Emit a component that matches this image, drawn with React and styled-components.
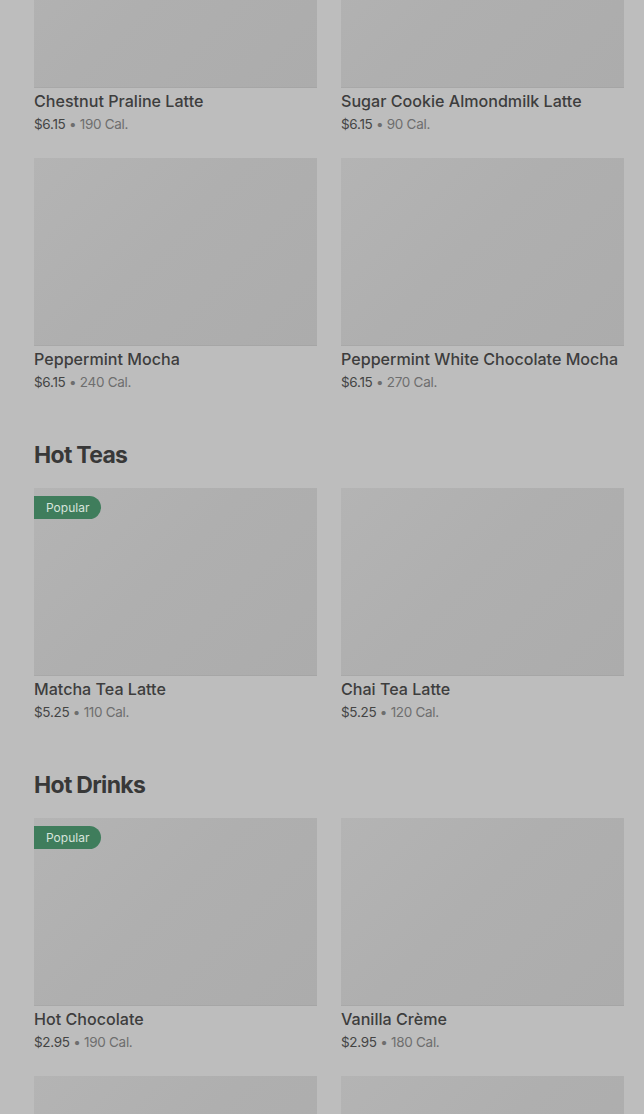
import React from 'react';
import styled, { createGlobalStyle } from 'styled-components';

const sections = [
  {
    title: null,
    items: [
      { name: 'Chestnut Praline Latte', price: '$6.15', cal: '190 Cal.' },
      { name: 'Sugar Cookie Almondmilk Latte', price: '$6.15', cal: '90 Cal.' },
      { name: 'Peppermint Mocha', price: '$6.15', cal: '240 Cal.' },
      { name: 'Peppermint White Chocolate Mocha', price: '$6.15', cal: '270 Cal.' }
    ]
  },
  {
    title: 'Hot Teas',
    items: [
      { name: 'Matcha Tea Latte', price: '$5.25', cal: '110 Cal.', popular: true },
      { name: 'Chai Tea Latte', price: '$5.25', cal: '120 Cal.' }
    ]
  },
  {
    title: 'Hot Drinks',
    items: [
      { name: 'Hot Chocolate', price: '$2.95', cal: '190 Cal.', popular: true },
      { name: 'Vanilla Crème', price: '$2.95', cal: '180 Cal.' },
      { name: '', price: '', cal: '' },
      { name: '', price: '', cal: '' }
    ]
  }
];

const App = () => {
  return (
    <>
      <GlobalStyle />
      <Page>
        {sections.map((section, i) => (
          <Section key={i}>
            {section.title && <SectionTitle>{section.title}</SectionTitle>}
            <Grid>
              {section.items.map((item, j) => (
                <Card key={j}>
                  <Thumb>
                    {item.popular && <Badge>Popular</Badge>}
                  </Thumb>
                  {item.name && (
                    <>
                      <Name>{item.name}</Name>
                      <Meta>
                        <Price>{item.price}</Price>
                        <Cal> • {item.cal}</Cal>
                      </Meta>
                    </>
                  )}
                </Card>
              ))}
            </Grid>
          </Section>
        ))}
      </Page>
    </>
  );
};

const GlobalStyle = createGlobalStyle`
  html, body {
    margin: 0;
    padding: 0;
    background: #bdbdbd;
    overflow: hidden;
  }
  body {
    font-family: Inter, "Noto Sans", sans-serif;
    color: #3a3a3a;
  }
`;

const Page = styled.div`
  margin-top: -100px;
  padding: 0 20px 0 34px;
  display: flex;
  flex-direction: column;
  gap: 47px;
`;

const Section = styled.section`
  display: flex;
  flex-direction: column;
  gap: 17px;
`;

const SectionTitle = styled.h2`
  margin: 0;
  font-size: 23px;
  line-height: 32px;
  font-weight: 700;
  letter-spacing: -0.7px;
  color: #383838;
`;

const Grid = styled.div`
  display: grid;
  grid-template-columns: 283px 283px;
  column-gap: 24px;
  row-gap: 24px;
`;

const Card = styled.div`
  display: flex;
  flex-direction: column;
`;

const Thumb = styled.div`
  position: relative;
  height: 188px;
  background: linear-gradient(135deg, #b4b4b4 0%, #afafaf 45%, #acacac 100%);
  box-shadow: inset 0 -1px 0 rgba(0, 0, 0, 0.04);
`;

const Badge = styled.span`
  position: absolute;
  top: 8px;
  left: 0;
  height: 23px;
  padding: 0 12px;
  display: flex;
  align-items: center;
  background: #3f7d5c;
  color: #d8e4dc;
  font-size: 12px;
  border-radius: 0 12px 12px 0;
`;

const Name = styled.div`
  margin-top: 2px;
  font-size: 16.1px;
  line-height: 22px;
  font-weight: 500;
  color: #3d3d3d;
`;

const Meta = styled.div`
  margin-top: 2px;
  font-size: 13.5px;
  line-height: 20px;
  letter-spacing: -0.3px;
`;

const Price = styled.span`
  color: #444;
`;

const Cal = styled.span`
  color: #6e6e6e;
`;

export default App;
